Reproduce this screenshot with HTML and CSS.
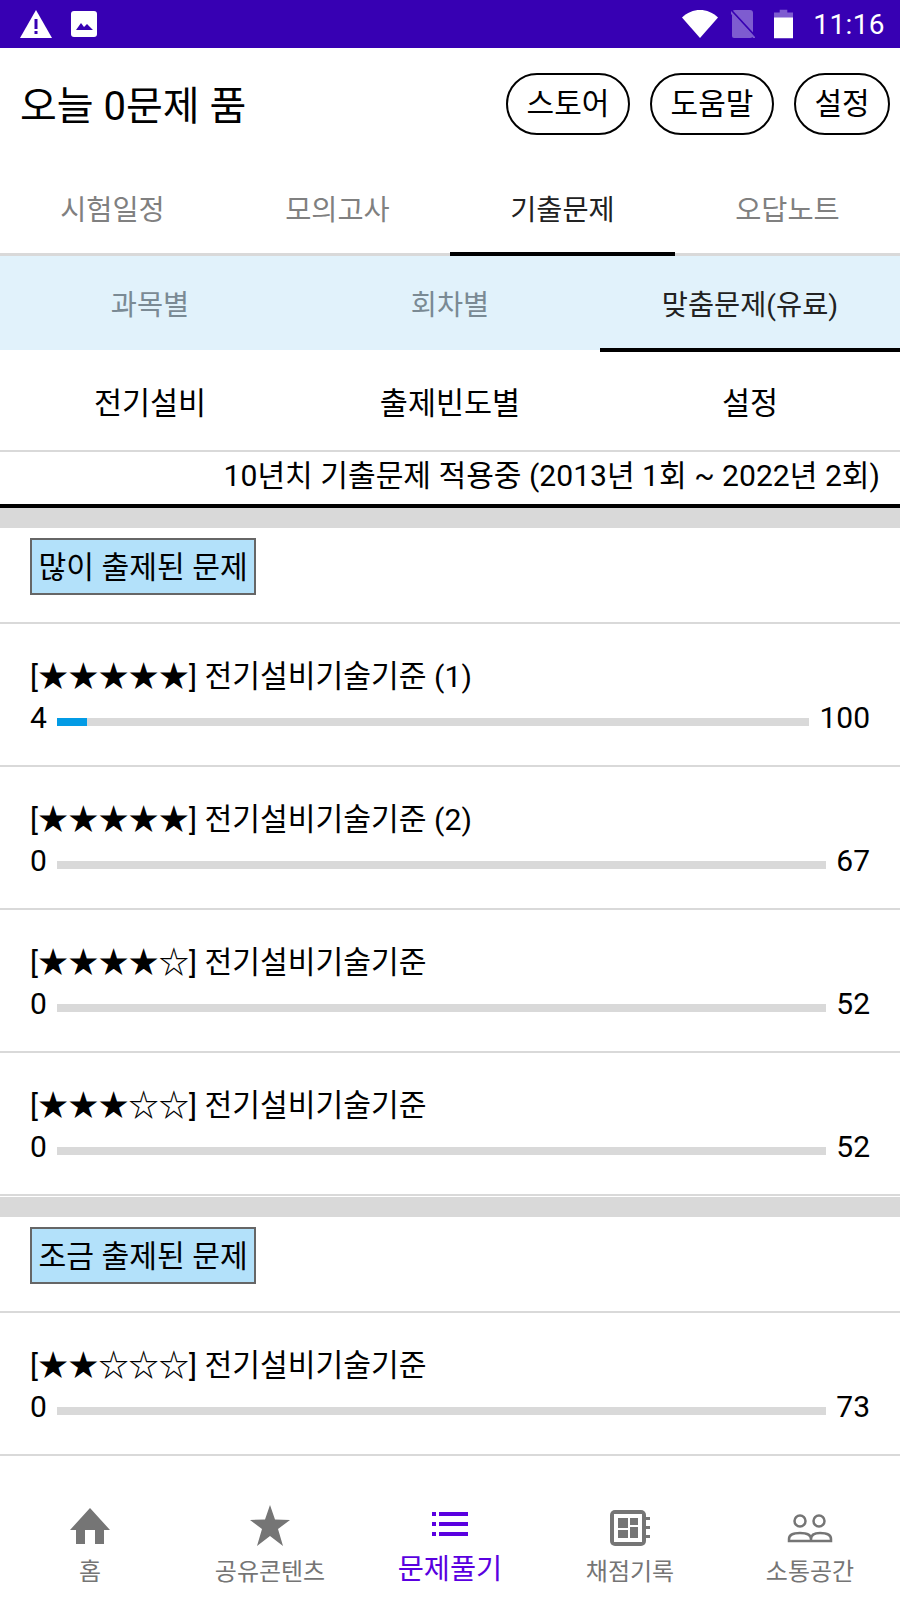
FILE: index.html

```html
<!DOCTYPE html>
<html lang="ko">
<head>
    <meta charset="UTF-8">
    <meta name="viewport" content="width=device-width, initial-scale=1.0">
    <title>기출문제</title>
    <link rel="stylesheet" href="styles.css">
</head>
<body>
    <div class="app">
        <div class="status-bar">
            <div class="status-left">
                <svg class="st-warn" viewBox="0 0 32 28"><path fill="#fff" d="M16 0 32 28H0z"/><path fill="#3700b3" d="M14.500 9h3v10h-3zM14.500 21h3v3h-3z"/></svg>
                <svg class="st-img" viewBox="0 0 26 26"><rect width="26" height="26" rx="3" fill="#fff"/><path fill="#3700b3" d="M4 20l5-7 3 4 3-3 6 6z" transform="translate(1 -1)"/></svg>
            </div>
            <div class="status-right">
                <svg class="st-wifi" viewBox="0 0 36 28"><path fill="#fff" d="M0 7.500C10-2.500 26-2.500 36 7.500L18 28z"/></svg>
                <svg class="st-sim" viewBox="0 0 24 28"><path fill="#7e5cd0" d="M4 0h15a3 3 0 0 1 3 3v22a3 3 0 0 1-3 3H3a2 2 0 0 1-2-2V3a3 3 0 0 1 3-3z"/><path stroke="#3700b3" stroke-width="2" d="M-1 -1l25 27"/><path stroke="#7e5cd0" stroke-width="2" d="M-1 1.500l25 27"/></svg>
                <svg class="st-batt" viewBox="0 0 20 30"><path fill="#7e5cd0" d="M6 0h8v3h6v5H0V3h6z"/><path fill="#fff" d="M0 8h20v22H0z"/></svg>
                <span class="st-time">11:16</span>
            </div>
        </div>

        <div class="top-bar">
            <h1>오늘 0문제 품</h1>
            <div class="top-buttons">
                <button class="pill">스토어</button>
                <button class="pill">도움말</button>
                <button class="pill">설정</button>
            </div>
        </div>

        <div class="main-tabs">
            <div class="main-tab">시험일정</div>
            <div class="main-tab">모의고사</div>
            <div class="main-tab active">기출문제</div>
            <div class="main-tab">오답노트</div>
        </div>

        <div class="sub-tabs">
            <div class="sub-tab">과목별</div>
            <div class="sub-tab">회차별</div>
            <div class="sub-tab active">맞춤문제(유료)</div>
        </div>

        <div class="filter-row">
            <div>전기설비</div>
            <div>출제빈도별</div>
            <div>설정</div>
        </div>

        <div class="notice">10년치 기출문제 적용중 (2013년 1회 ~ 2022년 2회)</div>

        <div class="content">
            <div class="band"></div>
            <div class="section-head"><span class="chip">많이 출제된 문제</span></div>

            <div class="row">
                <div class="row-title">[★★★★★] 전기설비기술기준 (1)</div>
                <div class="row-progress">
                    <span>4</span>
                    <div class="bar"><div class="bar-fill" style="width: 4%"></div></div>
                    <span>100</span>
                </div>
            </div>
            <div class="row">
                <div class="row-title">[★★★★★] 전기설비기술기준 (2)</div>
                <div class="row-progress">
                    <span>0</span>
                    <div class="bar"></div>
                    <span>67</span>
                </div>
            </div>
            <div class="row">
                <div class="row-title">[★★★★☆] 전기설비기술기준</div>
                <div class="row-progress">
                    <span>0</span>
                    <div class="bar"></div>
                    <span>52</span>
                </div>
            </div>
            <div class="row">
                <div class="row-title">[★★★☆☆] 전기설비기술기준</div>
                <div class="row-progress">
                    <span>0</span>
                    <div class="bar"></div>
                    <span>52</span>
                </div>
            </div>

            <div class="band band-mid"></div>
            <div class="section-head"><span class="chip">조금 출제된 문제</span></div>

            <div class="row">
                <div class="row-title">[★★☆☆☆] 전기설비기술기준</div>
                <div class="row-progress">
                    <span>0</span>
                    <div class="bar"></div>
                    <span>73</span>
                </div>
            </div>
        </div>

        <div class="bottom-nav">
            <div class="nav-item">
                <svg viewBox="0 0 40 36"><path fill="#757575" d="M20 0 40 22H34V36H25V22H15V36H6V22H0z"/></svg>
                <span>홈</span>
            </div>
            <div class="nav-item">
                <svg viewBox="0 0 40 36"><path fill="#757575" d="M20 -3 25 11.500 40 12 28 21 33 38 20 28 7 38 12 21 0 12 15 11.500z"/></svg>
                <span>공유콘텐츠</span>
            </div>
            <div class="nav-item active">
                <svg viewBox="0 0 40 36"><path fill="#5a00e0" d="M2 4h4v4H2zM9 4h29v4H9zM2 14h4v4H2zM9 14h29v4H9zM2 24h4v4H2zM9 24h29v4H9z"/></svg>
                <span>문제풀기</span>
            </div>
            <div class="nav-item">
                <svg viewBox="0 0 40 36"><rect x="0" y="2" width="36" height="36" rx="5" fill="#757575"/><rect x="4" y="6" width="28" height="28" fill="#fff"/><path fill="#757575" d="M8 10h10v10H8zM20 10h8v7H20zM20 19h8v11H20zM8 22h10v8H8zM36 9h4v3h-4zM36 18h4v3h-4zM36 27h4v3h-4z"/></svg>
                <span>채점기록</span>
            </div>
            <div class="nav-item">
                <svg viewBox="0 0 40 36"><g fill="none" stroke="#757575" stroke-width="2.500"><circle cx="10" cy="13" r="5.500"/><circle cx="29" cy="13" r="5.500"/><path d="M-1 33v-2c0-5 6-6 11-6s11 1 11 6v2zM21 33v-2c0-5 4-6 9-6s11 1 11 6v2z"/></g></svg>
                <span>소통공간</span>
            </div>
        </div>
    </div>
</body>
</html>
```

FILE: styles.css

```css
* {
    margin: 0;
    padding: 0;
    box-sizing: border-box;
}

body {
    background: white;
    color: black;
    font-family: Roboto, 'Noto Sans CJK KR', sans-serif;
}

.app {
    width: 900px;
    height: 1600px;
    display: flex;
    flex-direction: column;
    overflow: hidden;
}

.status-bar {
    height: 48px;
    flex: none;
    background: #3700b3;
    display: flex;
    align-items: center;
    justify-content: space-between;
    padding: 0 15px 0 20px;
}

.status-left, .status-right {
    display: flex;
    align-items: center;
}

.st-warn { width: 32px; height: 28px; }
.st-img { width: 26px; height: 26px; margin-left: 19px; }
.st-wifi { width: 36px; height: 28px; }
.st-sim { width: 24px; height: 28px; margin-left: 13px; }
.st-batt { width: 19px; height: 30px; margin-left: 19px; }

.st-time {
    color: white;
    font-size: 28px;
    letter-spacing: 0.4px;
    margin-left: 20px;
}

.top-bar {
    height: 112px;
    flex: none;
    display: flex;
    align-items: center;
    justify-content: space-between;
    padding: 0 10px 0 20px;
}

.top-bar h1 {
    font-size: 40px;
    font-weight: 400;
    padding-bottom: 2px;
}

.top-buttons {
    display: flex;
    gap: 20px;
}

.pill {
    height: 62px;
    width: 124px;
    background: white;
    border: 2px solid black;
    border-radius: 31px;
    font-family: inherit;
    font-size: 30px;
    line-height: 54px;
    color: black;
}

.pill:last-child {
    width: 96px;
}

.main-tabs {
    height: 96px;
    flex: none;
    display: flex;
    border-bottom: 3px solid #d9d9d9;
}

.main-tab {
    flex: 1;
    display: flex;
    align-items: center;
    justify-content: center;
    font-size: 28.4px;
    color: #808080;
    height: 96px;
    padding-bottom: 2px;
}

.main-tab.active {
    color: #222;
    box-shadow: inset 0 -4px black;
}

.sub-tabs {
    height: 94px;
    margin-bottom: 2px;
    flex: none;
    display: flex;
    background: #e1f2fb;
}

.sub-tab {
    flex: 1;
    height: 96px;
    display: flex;
    align-items: center;
    justify-content: center;
    font-size: 28.4px;
    color: #7a8a94;
    padding-bottom: 3px;
}

.sub-tab.active {
    color: #222;
    box-shadow: inset 0 -4px black;
}

.filter-row {
    height: 100px;
    flex: none;
    display: flex;
    border-bottom: 2px solid #d9d9d9;
}

.filter-row div {
    flex: 1;
    display: flex;
    align-items: center;
    justify-content: center;
    font-size: 30.5px;
}

.notice {
    height: 56px;
    flex: none;
    text-align: right;
    padding-right: 20px;
    font-size: 30.1px;
    line-height: 47px;
    border-bottom: 4px solid black;
}

.content {
    flex: 1;
    min-height: 0;
}

.band {
    height: 20px;
    background: #d9d9d9;
}

.band-mid {
    margin-top: 1px;
}

.section-head {
    height: 96px;
    padding: 10px 30px 0;
    border-bottom: 2px solid #d9d9d9;
}

.chip {
    display: inline-block;
    height: 57px;
    line-height: 55px;
    padding: 0 6.5px;
    background: #b3e1fa;
    border: 2px solid #666;
    font-size: 30.2px;
}

.row {
    height: 143px;
    padding: 30px 30px 0;
    border-bottom: 2px solid #d9d9d9;
}

.row-title {
    font-size: 30.2px;
    line-height: 45px;
}

.row-progress {
    display: flex;
    align-items: center;
    gap: 10px;
    font-size: 30px;
    line-height: 38px;
}

.bar {
    flex: 1;
    height: 8px;
    margin-top: 8px;
    background: #d9d9d9;
}

.bar-fill {
    height: 8px;
    background: #039be5;
}

.bottom-nav {
    height: 142px;
    flex: none;
    display: flex;
    padding: 50px 0 0;
    background: white;
}

.nav-item {
    flex: 1;
    display: flex;
    flex-direction: column;
    align-items: center;
    font-size: 24px;
    color: #757575;
    gap: 10px;
}

.nav-item svg {
    width: 40px;
    height: 36px;
    overflow: visible;
}

.nav-item span {
    line-height: 36px;
}

.nav-item.active {
    color: #5a00e0;
    font-size: 28.4px;
}

.nav-item.active span {
    margin-top: -2px;
}
```
